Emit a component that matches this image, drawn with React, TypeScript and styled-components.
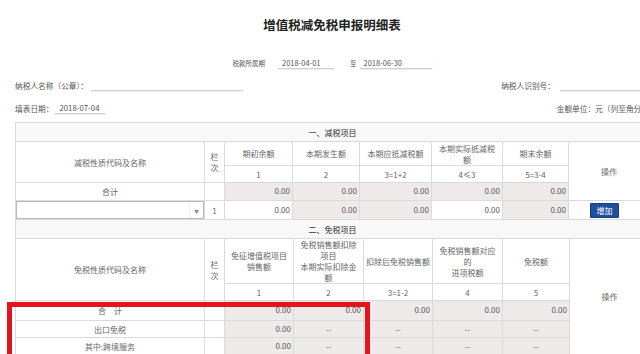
import React from "react";
import styled, { createGlobalStyle } from "styled-components";

const Global = createGlobalStyle`
  html, body {
    margin: 0;
    padding: 0;
    background: #fff;
    width: 640px;
    height: 354px;
    overflow: hidden;
  }
  body {
    font-family: "Noto Sans CJK SC", "Noto Sans", sans-serif;
    color: #555;
  }
`;

const Page = styled.div`
  position: relative;
  width: 664px;
  box-sizing: border-box;
  padding: 0 15px;
`;

const Title = styled.h1`
  margin: 0;
  height: 50px;
  line-height: 50px;
  text-align: center;
  font-size: 12.5px;
  font-weight: 700;
  color: #222;
`;

const PeriodRow = styled.div`
  margin-top: 6px;
  height: 14px;
  display: flex;
  justify-content: center;
  align-items: center;
  font-size: 6.5px;
  color: #555;
`;

const SmallLabel = styled.span<{ $ml?: number }>`
  margin-left: ${(p) => p.$ml ?? 0}px;
  white-space: nowrap;
`;

const Field = styled.span<{ $w: number; $ml?: number; $fs?: number }>`
  display: inline-block;
  box-sizing: border-box;
  width: ${(p) => p.$w}px;
  height: 11px;
  line-height: 10px;
  margin-left: ${(p) => p.$ml ?? 0}px;
  padding-left: 4px;
  font-size: ${(p) => p.$fs ?? 7.5}px;
  color: #555;
  border-bottom: 1px solid #cfcfcf;
  box-shadow: 0 1px 1px rgba(0, 0, 0, 0.06);
  white-space: nowrap;
`;

const InfoRow = styled.div<{ $mt: number }>`
  margin-top: ${(p) => p.$mt}px;
  height: 14px;
  display: flex;
  justify-content: space-between;
  align-items: center;
  font-size: 7.7px;
  color: #555;
`;

const InfoGroup = styled.div`
  display: flex;
  align-items: center;
  white-space: nowrap;
`;

const Table = styled.table`
  width: 634px;
  border-collapse: collapse;
  table-layout: fixed;
  font-size: 8px;
  color: #666;
`;

const FirstTable = styled(Table)`
  margin-top: 7px;
`;

const SecondTable = styled(Table)`
  margin-top: -1px;
`;

const Row = styled.tr<{ $h: number }>`
  height: ${(p) => p.$h}px;
`;

const Cell = styled.td<{ $gray?: boolean; $align?: "left" | "center" | "right" }>`
  border: 1px solid #dadada;
  padding: 0 2px;
  text-align: ${(p) => p.$align ?? "center"};
  vertical-align: middle;
  line-height: 11px;
  background: ${(p) => (p.$gray ? "#eeeaea" : "#fff")};
  color: #666;
  overflow: hidden;
  white-space: nowrap;
`;

const SectionCell = styled.td`
  border: 1px solid #dadada;
  background: #f8f8f8;
  text-align: center;
  vertical-align: middle;
  color: #333;
  font-size: 8px;
  line-height: 11px;
`;

const NumCell = styled(Cell)`
  text-align: right;
  padding: 0 2px 2px 2px;
  color: #555;
`;

const SelectCell = styled.td`
  border: 1px solid #dadada;
  padding: 0;
`;

const SelectBox = styled.div`
  box-sizing: border-box;
  height: 18px;
  border: 1px solid #b9b9b9;
  background: #fff;
  display: flex;
  justify-content: flex-end;
  align-items: stretch;
`;

const SelectArrow = styled.span`
  width: 13px;
  border-left: 1px solid #f0f0f0;
  color: #8a8a8a;
  font-size: 5px;
  display: flex;
  align-items: center;
  justify-content: center;
`;

const OpCell = styled.td`
  border: 1px solid #dadada;
  padding: 0 0 0 21px;
  text-align: left;
  vertical-align: middle;
`;

const AddButton = styled.button`
  width: 29px;
  height: 15px;
  padding: 0;
  background: #1f4f9e;
  color: #fff;
  border: 1px solid #173e7e;
  border-radius: 1px;
  font-family: inherit;
  font-size: 8px;
  line-height: 13px;
  display: block;
`;

const RedFrame = styled.div`
  position: absolute;
  left: 7px;
  top: 302px;
  width: 363px;
  height: 90px;
  box-sizing: border-box;
  border: 5px solid #e5131a;
  pointer-events: none;
`;

const s1Cols = [189, 20, 68, 67, 72, 71, 66, 81];
const s2Cols = [189, 20, 69, 70, 69, 70, 67, 80];

const Cols = ({ widths }: { widths: number[] }) => (
  <colgroup>
    {widths.map((w, i) => (
      <col key={i} style={{ width: w }} />
    ))}
  </colgroup>
);

const Lines = ({ text }: { text: string }) => (
  <>
    {text.split("\n").map((t, i, arr) => (
      <React.Fragment key={i}>
        {t}
        {i < arr.length - 1 && <br />}
      </React.Fragment>
    ))}
  </>
);

export default function App() {
  return (
    <>
      <Global />
      <Page>
        <Title>增值税减免税申报明细表</Title>
        <PeriodRow>
          <SmallLabel>税款所属期</SmallLabel>
          <Field $w={56} $ml={13}>2018-04-01</Field>
          <SmallLabel $ml={16}>至</SmallLabel>
          <Field $w={72} $ml={3}>2018-06-30</Field>
        </PeriodRow>
        <InfoRow $mt={8}>
          <InfoGroup>
            纳税人名称（公章）：
            <Field $w={152} $ml={3} />
          </InfoGroup>
          <InfoGroup>
            纳税人识别号：
            <Field $w={89} $ml={5} />
          </InfoGroup>
        </InfoRow>
        <InfoRow $mt={9}>
          <InfoGroup>
            填表日期：
            <Field $w={50} $ml={2} $fs={7.8}>2018-07-04</Field>
          </InfoGroup>
          <InfoGroup>金额单位：元（列至角分）</InfoGroup>
        </InfoRow>

        <FirstTable>
          <Cols widths={s1Cols} />
          <tbody>
            <Row $h={19}>
              <SectionCell colSpan={8}>一、减税项目</SectionCell>
            </Row>
            <Row $h={24}>
              <Cell rowSpan={2}>减税性质代码及名称</Cell>
              <Cell rowSpan={2}>
                <Lines text={"栏\n次"} />
              </Cell>
              <Cell>期初余额</Cell>
              <Cell>本期发生额</Cell>
              <Cell>本期应抵减税额</Cell>
              <Cell>
                <Lines text={"本期实际抵减税\n额"} />
              </Cell>
              <Cell>期末余额</Cell>
              <Cell rowSpan={3}>操作</Cell>
            </Row>
            <Row $h={17}>
              <Cell>1</Cell>
              <Cell>2</Cell>
              <Cell>3=1+2</Cell>
              <Cell>4≤3</Cell>
              <Cell>5=3-4</Cell>
            </Row>
            <Row $h={18}>
              <Cell>合计</Cell>
              <Cell />
              <NumCell $gray>0.00</NumCell>
              <NumCell $gray>0.00</NumCell>
              <NumCell $gray>0.00</NumCell>
              <NumCell $gray>0.00</NumCell>
              <NumCell $gray>0.00</NumCell>
            </Row>
            <Row $h={18}>
              <SelectCell>
                <SelectBox>
                  <SelectArrow>▼</SelectArrow>
                </SelectBox>
              </SelectCell>
              <Cell>1</Cell>
              <NumCell>0.00</NumCell>
              <NumCell $gray>0.00</NumCell>
              <NumCell $gray>0.00</NumCell>
              <NumCell>0.00</NumCell>
              <NumCell $gray>0.00</NumCell>
              <OpCell>
                <AddButton>增加</AddButton>
              </OpCell>
            </Row>
          </tbody>
        </FirstTable>

        <SecondTable>
          <Cols widths={s2Cols} />
          <tbody>
            <Row $h={19}>
              <SectionCell colSpan={8}>二、免税项目</SectionCell>
            </Row>
            <Row $h={44}>
              <Cell rowSpan={2}>免税性质代码及名称</Cell>
              <Cell rowSpan={2}>
                <Lines text={"栏\n次"} />
              </Cell>
              <Cell>
                <Lines text={"免征增值税项目\n销售额"} />
              </Cell>
              <Cell>
                <Lines text={"免税销售额扣除\n项目\n本期实际扣除金\n额"} />
              </Cell>
              <Cell>扣除后免税销售额</Cell>
              <Cell>
                <Lines text={"免税销售额对应\n的\n进项税额"} />
              </Cell>
              <Cell>免税额</Cell>
              <Cell rowSpan={6}>操作</Cell>
            </Row>
            <Row $h={17}>
              <Cell>1</Cell>
              <Cell>2</Cell>
              <Cell>3=1-2</Cell>
              <Cell>4</Cell>
              <Cell>5</Cell>
            </Row>
            <Row $h={20}>
              <Cell>合　计</Cell>
              <Cell />
              <NumCell $gray>0.00</NumCell>
              <NumCell $gray>0.00</NumCell>
              <NumCell $gray>0.00</NumCell>
              <NumCell $gray>0.00</NumCell>
              <NumCell $gray>0.00</NumCell>
            </Row>
            <Row $h={17}>
              <Cell>出口免税</Cell>
              <Cell />
              <NumCell $gray>0.00</NumCell>
              <Cell $gray>--</Cell>
              <Cell $gray>--</Cell>
              <Cell $gray>--</Cell>
              <Cell $gray>--</Cell>
            </Row>
            <Row $h={17}>
              <Cell>其中:跨境服务</Cell>
              <Cell />
              <NumCell $gray>0.00</NumCell>
              <Cell $gray>--</Cell>
              <Cell $gray>--</Cell>
              <Cell $gray>--</Cell>
              <Cell $gray>--</Cell>
            </Row>
          </tbody>
        </SecondTable>
        <RedFrame />
      </Page>
    </>
  );
}
